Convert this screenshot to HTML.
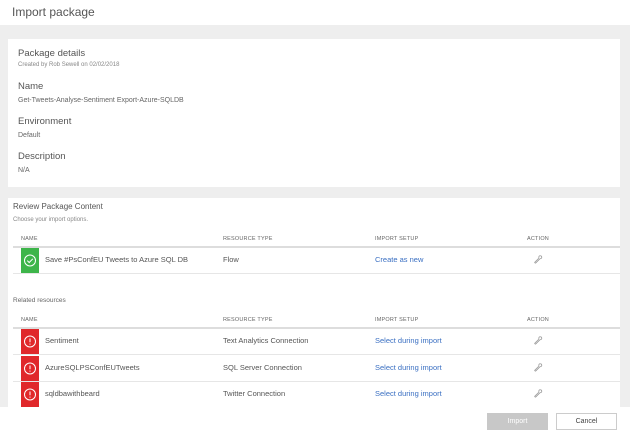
<!DOCTYPE html>
<html><head><style>
*{margin:0;padding:0;box-sizing:border-box}
body{width:630px;height:435px;overflow:hidden;background:#fff;font-family:"Segoe UI","Liberation Sans",sans-serif;color:#444;position:relative}
.abs{position:absolute;white-space:nowrap}
.gray{position:absolute;left:0;top:25px;width:630px;height:382px;background:#eeeeee}
.card{position:absolute;left:8px;width:612px;background:#fff}
.h{font-size:9.5px;color:#555}
.s{font-size:6px;color:#888}
.v{font-size:7px;color:#666}
.th{font-size:5.5px;color:#666;letter-spacing:.2px}
.line2{position:absolute;left:13px;width:607px;height:2px;background:#ddd}
.line1{position:absolute;left:13px;width:607px;height:1px;background:#e6e6e6}
.ic{position:absolute;left:21px;width:18px;height:25px}
.t{font-size:7.5px;color:#555}
.lk{font-size:7.5px;color:#3a6fc2}
</style></head><body>
<div class="abs" style="left:12px;top:5px;font-size:12px;color:#555">Import package</div>
<div class="gray"></div>
<div class="card" style="top:39px;height:148px"></div>
<div class="card" style="top:198px;height:209px"></div>
<div class="abs h" style="left:18px;top:48px">Package details</div>
<div class="abs s" style="left:18px;top:62px">Created by Rob Sewell on 02/02/2018</div>
<div class="abs h" style="left:18px;top:81px">Name</div>
<div class="abs v" style="left:18px;top:97px">Get-Tweets-Analyse-Sentiment Export-Azure-SQLDB</div>
<div class="abs h" style="left:18px;top:116px">Environment</div>
<div class="abs v" style="left:18px;top:132px">Default</div>
<div class="abs h" style="left:18px;top:151px">Description</div>
<div class="abs v" style="left:18px;top:167px">N/A</div>

<div class="abs" style="left:13px;top:202px;font-size:8px;color:#555">Review Package Content</div>
<div class="abs s" style="left:13px;top:217px">Choose your import options.</div>

<div class="abs th" style="left:21px;top:236px">NAME</div>
<div class="abs th" style="left:223px;top:236px">RESOURCE TYPE</div>
<div class="abs th" style="left:375px;top:236px">IMPORT SETUP</div>
<div class="abs th" style="left:527px;top:236px">ACTION</div>
<div class="line2" style="top:246px"></div>
<div class="ic" style="top:248px;background:#3db54a"><svg width="18" height="25"><circle cx="9" cy="12.5" r="5.5" fill="none" stroke="#fff" stroke-width="1"/><path d="M6.3 12.6l1.9 1.9 3.6-3.7" fill="none" stroke="#fff" stroke-width="1"/></svg></div>
<div class="abs t" style="left:45px;top:255px">Save #PsConfEU Tweets to Azure SQL DB</div>
<div class="abs t" style="left:223px;top:255px">Flow</div>
<div class="abs lk" style="left:375px;top:255px">Create as new</div>
<div class="line1" style="top:273px"></div>

<div class="abs s" style="left:13px;top:297px;font-size:6.5px;color:#666">Related resources</div>
<div class="abs th" style="left:21px;top:317px">NAME</div>
<div class="abs th" style="left:223px;top:317px">RESOURCE TYPE</div>
<div class="abs th" style="left:375px;top:317px">IMPORT SETUP</div>
<div class="abs th" style="left:527px;top:317px">ACTION</div>
<div class="line2" style="top:327px"></div>

<div class="ic" style="top:329px;background:#e0282b"><svg width="18" height="25"><circle cx="9" cy="12.5" r="5.5" fill="none" stroke="#fff" stroke-width="1"/><path d="M9 9.5v3.8M9 14.6v1" stroke="#fff" stroke-width="1"/></svg></div>
<div class="abs t" style="left:45px;top:336px">Sentiment</div>
<div class="abs t" style="left:223px;top:336px">Text Analytics Connection</div>
<div class="abs lk" style="left:375px;top:336px">Select during import</div>
<div class="line1" style="top:354px"></div>

<div class="ic" style="top:356px;background:#e0282b"><svg width="18" height="25"><circle cx="9" cy="12.5" r="5.5" fill="none" stroke="#fff" stroke-width="1"/><path d="M9 9.5v3.8M9 14.6v1" stroke="#fff" stroke-width="1"/></svg></div>
<div class="abs t" style="left:45px;top:363px">AzureSQLPSConfEUTweets</div>
<div class="abs t" style="left:223px;top:363px">SQL Server Connection</div>
<div class="abs lk" style="left:375px;top:363px">Select during import</div>
<div class="line1" style="top:381px"></div>

<div class="ic" style="top:382px;background:#e0282b"><svg width="18" height="25"><circle cx="9" cy="12.5" r="5.5" fill="none" stroke="#fff" stroke-width="1"/><path d="M9 9.5v3.8M9 14.6v1" stroke="#fff" stroke-width="1"/></svg></div>
<div class="abs t" style="left:45px;top:389px">sqldbawithbeard</div>
<div class="abs t" style="left:223px;top:389px">Twitter Connection</div>
<div class="abs lk" style="left:375px;top:389px">Select during import</div>

<svg class="abs" style="left:533px;top:254px" width="10" height="10"><path d="M1.5 8.5l4.5-4.5M2.5 9.2l4.5-4.5M1.5 8.5l1 .7M6 4a1.5 1.5 0 1 1 1 .7" fill="none" stroke="#999" stroke-width=".8"/></svg>
<svg class="abs" style="left:533px;top:335px" width="10" height="10"><path d="M1.5 8.5l4.5-4.5M2.5 9.2l4.5-4.5M1.5 8.5l1 .7M6 4a1.5 1.5 0 1 1 1 .7" fill="none" stroke="#999" stroke-width=".8"/></svg>
<svg class="abs" style="left:533px;top:362px" width="10" height="10"><path d="M1.5 8.5l4.5-4.5M2.5 9.2l4.5-4.5M1.5 8.5l1 .7M6 4a1.5 1.5 0 1 1 1 .7" fill="none" stroke="#999" stroke-width=".8"/></svg>
<svg class="abs" style="left:533px;top:388px" width="10" height="10"><path d="M1.5 8.5l4.5-4.5M2.5 9.2l4.5-4.5M1.5 8.5l1 .7M6 4a1.5 1.5 0 1 1 1 .7" fill="none" stroke="#999" stroke-width=".8"/></svg>

<div class="abs" style="left:487px;top:413px;width:61px;height:17px;background:#c8c8c8;color:#fff;font-size:7px;text-align:center;line-height:17px">Import</div>
<div class="abs" style="left:556px;top:413px;width:61px;height:17px;border:1px solid #ccc;color:#444;font-size:7px;text-align:center;line-height:15px">Cancel</div>
</body></html>
